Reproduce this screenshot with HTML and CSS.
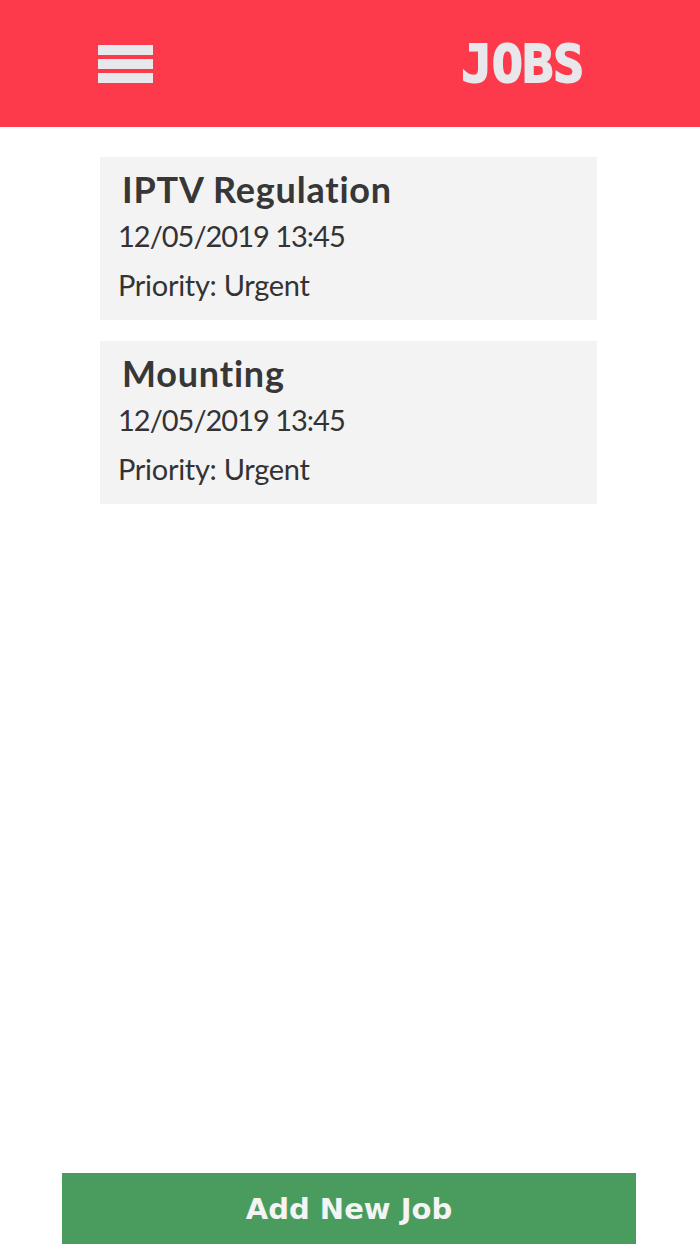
FILE: index.html
```html
<!DOCTYPE html>
<html lang="en">
<head>
    <meta charset="UTF-8">
    <meta name="viewport" content="width=device-width, initial-scale=1.0">
    <title>Jobs</title>
    <link rel="stylesheet" href="styles.css">
</head>
<body>
    <header class="topbar">
        <div class="menu-btn">
            <span></span>
            <span></span>
            <span></span>
        </div>
        <h1 class="page-title">JOBS</h1>
    </header>

    <main class="job-list">
        <div class="job-card">
            <h2 class="job-name">IPTV Regulation</h2>
            <div class="job-line job-date">12/05/2019 13:45</div>
            <div class="job-line job-priority">Priority: Urgent</div>
        </div>
        <div class="job-card">
            <h2 class="job-name">Mounting</h2>
            <div class="job-line job-date">12/05/2019 13:45</div>
            <div class="job-line job-priority">Priority: Urgent</div>
        </div>
    </main>

    <button class="add-btn" type="button">Add New Job</button>
</body>
</html>
```

FILE: styles.css
```css
body {
    font-family: Lato, "Open Sans", sans-serif;
    margin: 0;
    min-height: 100vh;
    display: flex;
    flex-direction: column;
    background-color: #ffffff;
    color: #333333;
}
.topbar {
    height: 127px;
    background-color: #fd3a4b;
    display: flex;
    align-items: center;
    justify-content: space-between;
    padding: 0 116px 0 98px;
}
.menu-btn {
    width: 55px;
    display: flex;
    flex-direction: column;
    gap: 4px;
    margin-top: 1px;
}
.menu-btn span {
    display: block;
    height: 10px;
    background-color: #e8e8ec;
}
.page-title {
    margin: 0;
    font-family: "DejaVu Sans Mono", monospace;
    font-weight: bold;
    font-size: 51px;
    line-height: 1;
    color: #e8e8ec;
    -webkit-text-stroke: 2px #e8e8ec;
    margin-top: 2px;
}
.job-list {
    display: flex;
    flex-direction: column;
    gap: 21px;
    margin: 30px 103px 0 100px;
}
.job-card {
    background-color: #f4f3f4;
    padding: 10px 0 13px;
}
.job-name {
    margin: 0;
    padding-left: 22px;
    font-size: 36px;
    font-weight: bold;
    line-height: 44px;
    letter-spacing: 0.8px;
    color: #373737;
}
.job-line {
    padding-left: 18px;
    font-size: 29px;
    line-height: 44px;
    color: #333333;
}
.job-date {
    margin-top: 3px;
    letter-spacing: -1px;
}
.job-priority {
    margin-top: 5px;
    letter-spacing: -0.3px;
}
.add-btn {
    margin: auto 64px 0 62px;
    height: 71px;
    border: none;
    background-color: #4a9c5e;
    color: #f4f4f4;
    font-family: "DejaVu Sans", sans-serif;
    font-weight: bold;
    font-size: 29px;
    padding: 0;
    cursor: pointer;
}
```
